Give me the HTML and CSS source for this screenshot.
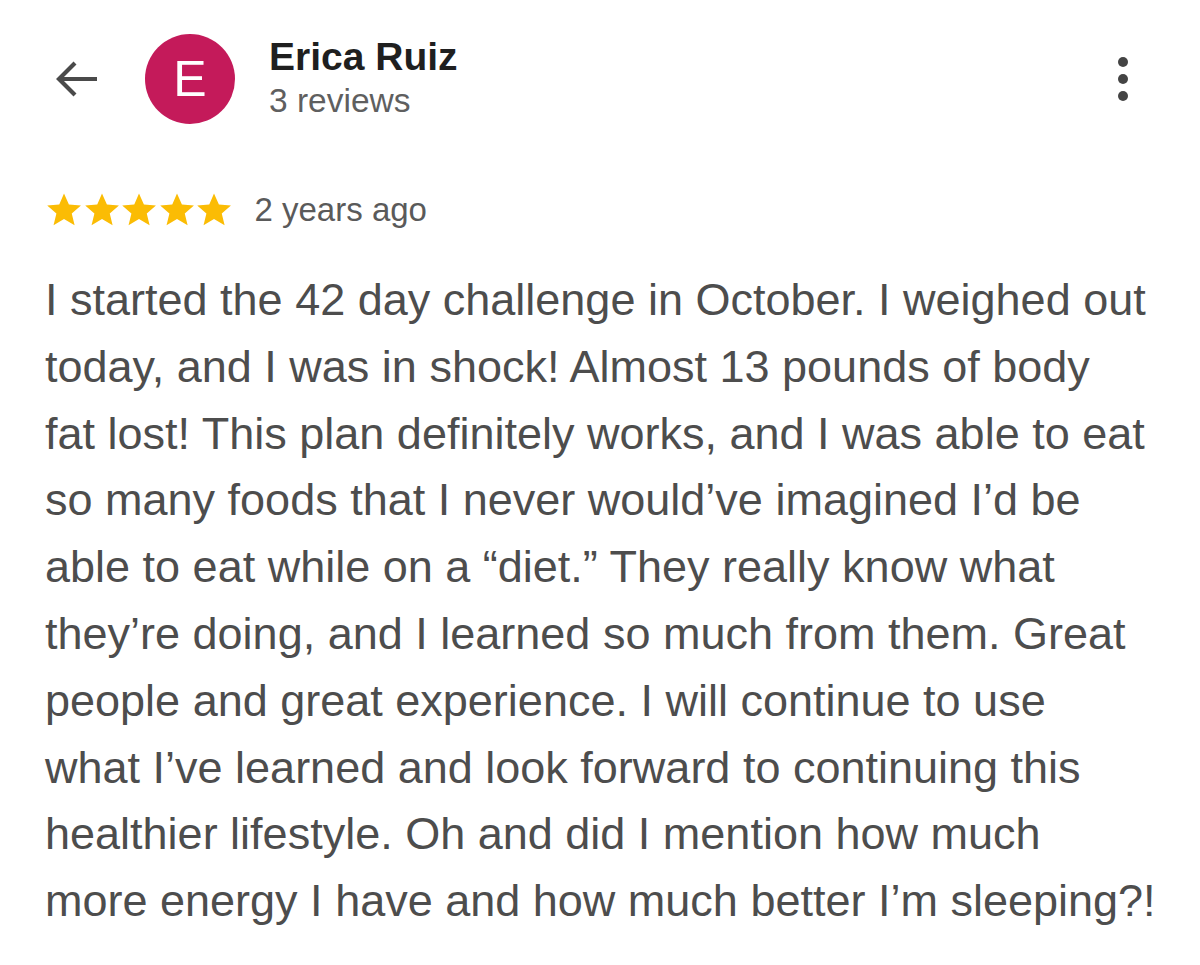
FILE: index.html
```html
<!DOCTYPE html>
<html>
<head>
<meta charset="utf-8">
<link rel="stylesheet" href="styles.css">
</head>
<body>
<div class="page">
  <header class="top">
    <div class="back">
      <svg width="50" height="50" viewBox="0 0 50 50"><path d="M46 25H8M24 9L8 25l16 16" fill="none" stroke="#4a4a4a" stroke-width="4.2" stroke-linecap="butt"/></svg>
    </div>
    <div class="avatar">E</div>
    <div class="who">
      <div class="name">Erica Ruiz</div>
      <div class="count">3 reviews</div>
    </div>
    <div class="more">
      <span class="dot"></span><span class="dot"></span><span class="dot"></span>
    </div>
  </header>
  <div class="meta">
    <div class="stars">
      <svg viewBox="0 0 24 24"><path d="M12 1.5l3.1 7.1 7.6.6-5.8 5 1.8 7.5L12 17.7l-6.6 4 1.8-7.5-5.8-5 7.6-.6z"/></svg>
      <svg viewBox="0 0 24 24"><path d="M12 1.5l3.1 7.1 7.6.6-5.8 5 1.8 7.5L12 17.7l-6.6 4 1.8-7.5-5.8-5 7.6-.6z"/></svg>
      <svg viewBox="0 0 24 24"><path d="M12 1.5l3.1 7.1 7.6.6-5.8 5 1.8 7.5L12 17.7l-6.6 4 1.8-7.5-5.8-5 7.6-.6z"/></svg>
      <svg viewBox="0 0 24 24"><path d="M12 1.5l3.1 7.1 7.6.6-5.8 5 1.8 7.5L12 17.7l-6.6 4 1.8-7.5-5.8-5 7.6-.6z"/></svg>
      <svg viewBox="0 0 24 24"><path d="M12 1.5l3.1 7.1 7.6.6-5.8 5 1.8 7.5L12 17.7l-6.6 4 1.8-7.5-5.8-5 7.6-.6z"/></svg>
    </div>
    <span class="when">2 years ago</span>
  </div>
  <p class="review">I started the 42 day challenge in October. I weighed out<br>today, and I was in shock! Almost 13 pounds of body<br>fat lost! This plan definitely works, and I was able to eat<br>so many foods that I never would’ve imagined I’d be<br>able to eat while on a “diet.” They really know what<br>they’re doing, and I learned so much from them. Great<br>people and great experience. I will continue to use<br>what I’ve learned and look forward to continuing this<br>healthier lifestyle. Oh and did I mention how much<br>more energy I have and how much better I’m sleeping?!</p>
</div>
</body>
</html>
```
FILE: styles.css
```css
html, body {
  margin: 0;
  background: #ffffff;
}
.page {
  font-family: "Liberation Sans", Arial, Helvetica, sans-serif;
  padding: 0 0 0 45px;
  width: 1155px;
}
.top {
  display: flex;
  align-items: center;
  height: 160px;
}
.back {
  width: 60px;
  height: 50px;
  margin-left: 6px;
  margin-top: -2px;
}
.avatar {
  width: 90px;
  height: 90px;
  border-radius: 50%;
  background: #c41a5a;
  color: #fff;
  font-size: 50px;
  display: flex;
  align-items: center;
  justify-content: center;
  margin-left: 34px;
  margin-top: -2px;
}
.who {
  margin-left: 34px;
  margin-top: -2px;
  flex: 1;
}
.name {
  font-weight: bold;
  font-size: 39px;
  color: #1f1f1f;
  line-height: 44px;
}
.count {
  font-size: 33.5px;
  color: #5f5f5f;
  line-height: 44px;
}
.more {
  display: flex;
  flex-direction: column;
  gap: 7px;
  margin-right: 72px;
  margin-top: -2px;
}
.dot {
  width: 10px;
  height: 10px;
  border-radius: 50%;
  background: #444;
}
.meta {
  display: flex;
  align-items: center;
  margin-top: 30px;
  height: 40px;
}
.stars {
  display: flex;
}
.stars svg {
  width: 38px;
  height: 38px;
  fill: #fbbc04;
  margin-right: -0.5px;
}
.when {
  margin-left: 22px;
  font-size: 33px;
  color: #5a5a5a;
}
.review {
  margin: 37px 0 0 0;
  font-size: 45px;
  line-height: 66.8px;
  color: #4d4d4d;
}
```
